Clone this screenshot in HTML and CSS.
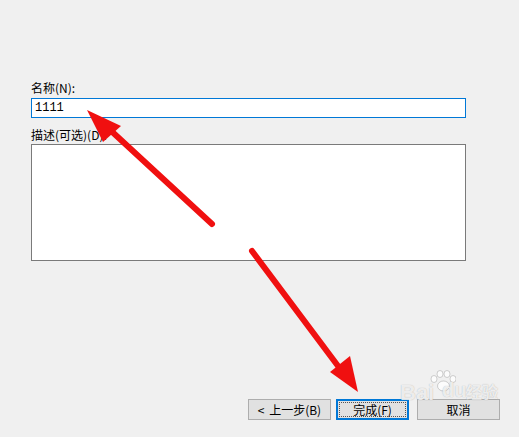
FILE: index.html
```html
<!DOCTYPE html>
<html>
<head>
<meta charset="utf-8">
<link rel="stylesheet" href="styles.css">
</head>
<body>
<div class="page">
  <div class="form">
    <label class="label first">名称(N):</label>
    <div class="input">1111</div>
    <label class="label second">描述(可选)(D):</label>
    <div class="textarea"></div>
  </div>
  <div class="buttons">
    <button class="btn back">&lt; 上一步(B)</button>
    <button class="btn finish"><span class="focus">完成(F)</span></button>
    <button class="btn cancel">取消</button>
  </div>
  <div class="watermark">
    <svg class="paw" width="26" height="22" viewBox="0 0 26 22">
      <g fill="rgba(255,255,255,0.8)" stroke="rgba(140,140,140,0.5)" stroke-width="0.8">
        <ellipse cx="4" cy="9" rx="3" ry="3.5"/>
        <ellipse cx="10" cy="4" rx="3" ry="3.5"/>
        <ellipse cx="17" cy="4" rx="3" ry="3.5"/>
        <ellipse cx="23" cy="9" rx="3" ry="3.5"/>
        <ellipse cx="13.5" cy="16" rx="6" ry="5"/>
      </g>
    </svg>
    <span class="bai">Bai</span><span class="du">du</span><span class="jy">经验</span>
  </div>
  <svg class="arrows" width="519" height="437" viewBox="0 0 519 437">
    <line x1="212" y1="224" x2="108" y2="128" stroke="#f01010" stroke-width="6" stroke-linecap="round"/>
    <polygon points="87,110 121,126 103,142" fill="#f01010"/>
    <line x1="252" y1="251" x2="338" y2="366" stroke="#f01010" stroke-width="6" stroke-linecap="round"/>
    <polygon points="358,392 330,372 350,356" fill="#f01010"/>
  </svg>
</div>
</body>
</html>
```
FILE: styles.css
```css
html, body {
  margin: 0;
  padding: 0;
  background: #f0f0f0;
}
.page {
  position: relative;
  width: 519px;
  height: 437px;
  overflow: hidden;
  font-family: "Noto Sans CJK SC", "Liberation Sans", sans-serif;
  font-size: 12px;
  color: #000;
}
.form {
  display: flex;
  flex-direction: column;
  padding: 80px 0 0 31px;
  width: 435px;
}
.label {
  display: block;
  line-height: 16px;
  height: 16px;
}
.first { margin-bottom: 2px; }
.input {
  height: 18px;
  border: 1px solid #0078d7;
  background: #fff;
  line-height: 18px;
  padding-left: 3px;
  font-family: "Liberation Mono", monospace;
  font-size: 12px;
}
.second { margin-top: 9px; margin-bottom: 1px; }
.textarea {
  height: 115px;
  border: 1px solid #7a7a7a;
  background: #fff;
}
.buttons {
  display: flex;
  justify-content: flex-end;
  align-items: center;
  margin-top: 138px;
  padding-right: 19px;
}
.btn {
  height: 21px;
  margin: 0;
  padding: 0;
  font-family: "Noto Sans CJK SC", "Liberation Sans", sans-serif;
  font-size: 12px;
  line-height: 19px;
  color: #000;
  background: #e1e1e1;
  border: 1px solid #adadad;
  display: flex;
  align-items: center;
  justify-content: center;
}
.back { width: 83px; word-spacing: 2px; }
.finish {
  width: 73px;
  margin-left: 5px;
  border: 2px solid #0078d7;
  padding: 1px;
}
.focus {
  flex: 1;
  align-self: stretch;
  display: flex;
  align-items: center;
  justify-content: center;
  border: 1px dotted #555;
  line-height: 13px;
}
.cancel { width: 83px; margin-left: 8px; }
.watermark {
  position: absolute;
  left: 400px;
  top: 368px;
  width: 110px;
  height: 36px;
  color: rgba(255,255,255,0.8);
  text-shadow: 0 0 1px rgba(120,120,120,0.6);
  font-family: "Liberation Sans", sans-serif;
  pointer-events: none;
}
.paw {
  position: absolute;
  left: 30px;
  top: 2px;
}
.bai {
  position: absolute;
  left: 0;
  top: 14px;
  font-size: 22px;
  line-height: 22px;
  font-weight: bold;
}
.du {
  position: absolute;
  left: 42px;
  top: 12px;
  font-size: 20px;
  line-height: 20px;
  font-weight: bold;
}
.jy {
  position: absolute;
  left: 66px;
  top: 14px;
  font-size: 16px;
  line-height: 18px;
  font-family: "Noto Sans CJK SC", sans-serif;
  font-weight: bold;
}
.arrows {
  position: absolute;
  left: 0;
  top: 0;
  pointer-events: none;
}
```
